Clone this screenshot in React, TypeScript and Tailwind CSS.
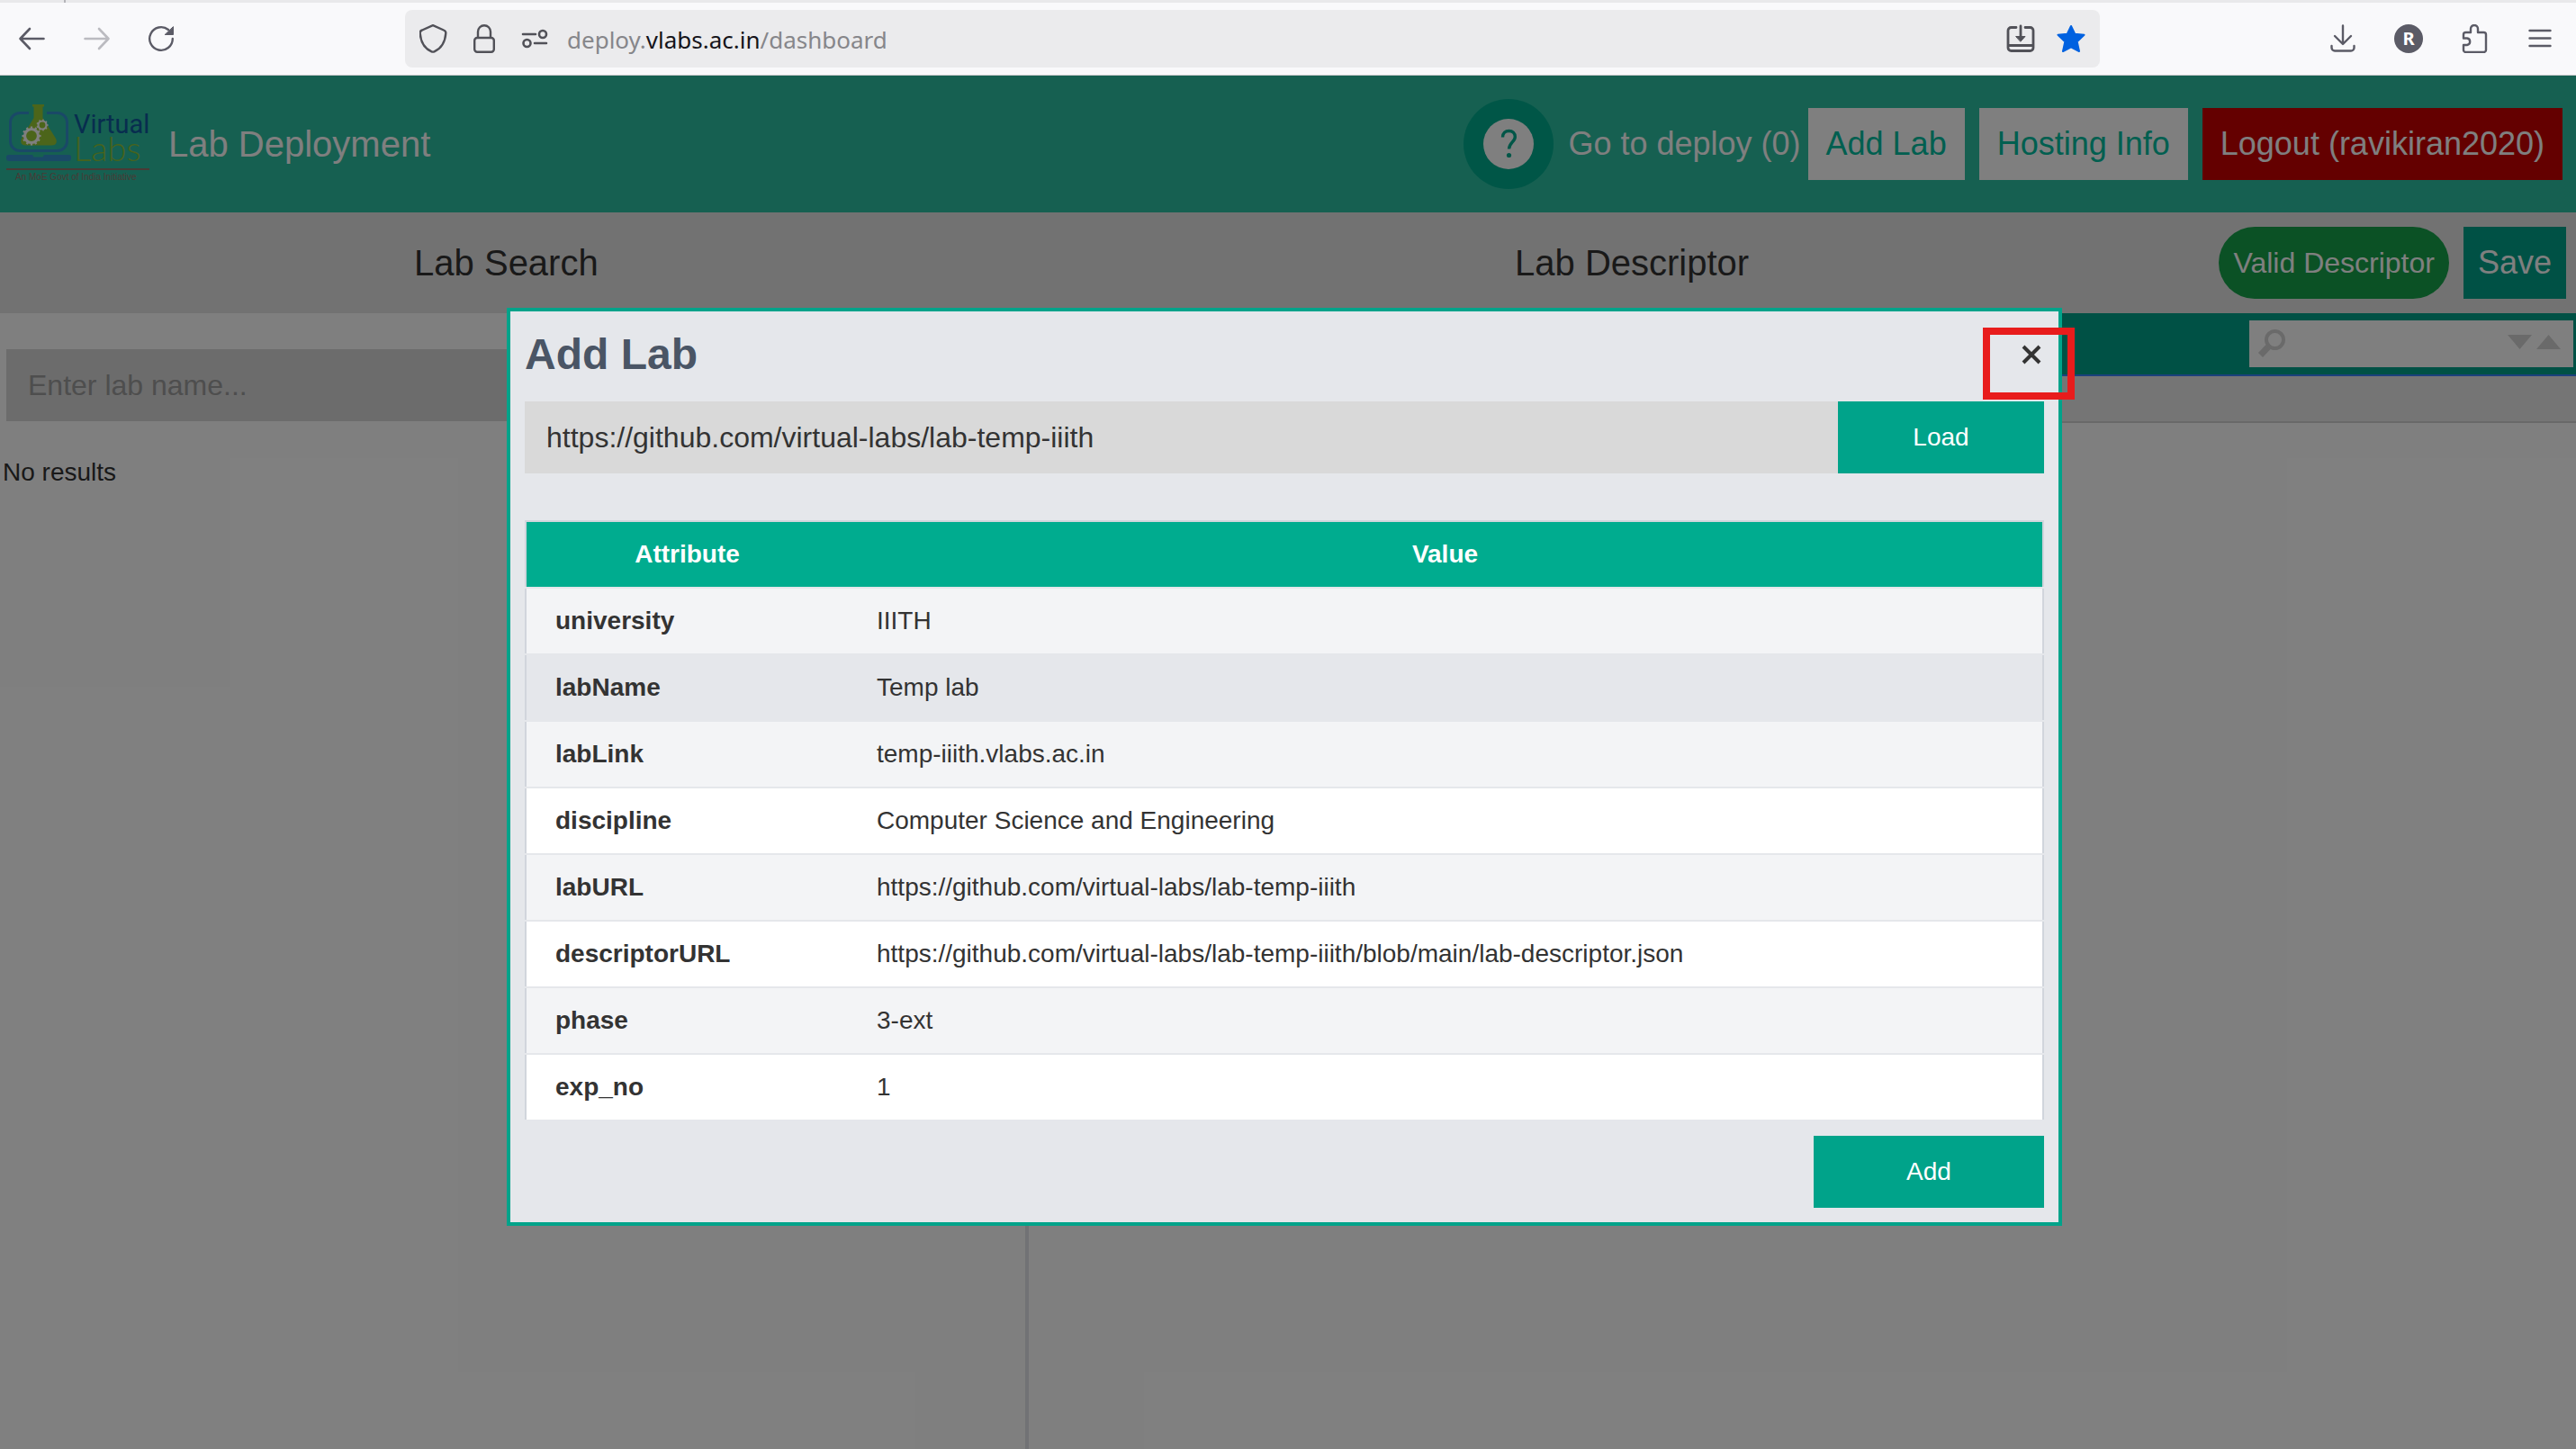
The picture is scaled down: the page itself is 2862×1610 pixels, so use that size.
import React from "react";

const attributes: [string, string][] = [
  ["university", "IIITH"],
  ["labName", "Temp lab"],
  ["labLink", "temp-iiith.vlabs.ac.in"],
  ["discipline", "Computer Science and Engineering"],
  ["labURL", "https://github.com/virtual-labs/lab-temp-iiith"],
  ["descriptorURL", "https://github.com/virtual-labs/lab-temp-iiith/blob/main/lab-descriptor.json"],
  ["phase", "3-ext"],
  ["exp_no", "1"],
];

function Gear({ cx, cy, r, teeth, width }: { cx: number; cy: number; r: number; teeth: number; width: number }) {
  const marks = Array.from({ length: teeth }, (_, i) => (i * 2 * Math.PI) / teeth);
  return (
    <g stroke="#fff" fill="none">
      <circle cx={cx} cy={cy} r={r} strokeWidth={width} />
      {marks.map((a) => (
        <line
          key={a}
          x1={cx + Math.cos(a) * r}
          y1={cy + Math.sin(a) * r}
          x2={cx + Math.cos(a) * (r + width * 0.95)}
          y2={cy + Math.sin(a) * (r + width * 0.95)}
          strokeWidth={width * 0.7}
        />
      ))}
    </g>
  );
}

function Logo() {
  return (
    <svg viewBox="0 0 166 96" width="166" height="96" className="shrink-0 overflow-visible" role="img" aria-label="Virtual Labs">
      <path d="M32 13.500H22a10.500 10.500 0 0 0-10.500 10.500v21a10.500 10.500 0 0 0 10.500 10.500h42a10.500 10.500 0 0 0 10.500-10.500V24A10.500 10.500 0 0 0 64 13.500H52" fill="none" stroke="#3493cf" strokeWidth="3" />
      <path d="M36 4h13v2.500h-1.500V19L61.500 41c3 5 .5 8.500-4 8.500h-29c-4.500 0-7-3.500-4-8.500L37.500 19V6.500H36Z" fill="#98ca35" />
      <Gear cx={35} cy={39} r={7.5} teeth={12} width={3.2} />
      <Gear cx={47} cy={27} r={4.5} teeth={9} width={2.2} />
      <path d="M9.500 60H36l1.500 2.500h10L49 60h27.500a2.500 2.500 0 0 1 2.500 2.500v1a3.500 3.500 0 0 1-3.500 3.500h-65A3.500 3.500 0 0 1 7 63.500v-1A2.500 2.500 0 0 1 9.500 60Z" fill="#3493cf" />
      <text x="82" y="36" fontFamily="Roboto" fontSize="29" fontWeight="400" fill="#105a9e">Virtual</text>
      <text x="82" y="67" fontFamily="Lato, Roboto" fontSize="38" fontWeight="300" fill="#8cc63a">Labs</text>
      <path d="M7 76H166" stroke="#92756c" strokeWidth="2" />
      <text x="17" y="88" fontFamily="Liberation Sans" fontSize="10" fill="#92756c">An MoE Govt of India Initiative</text>
    </svg>
  );
}

const iconButton = "flex h-8 w-8 items-center justify-center";

function BrowserToolbar() {
  return (
    <div className="shrink-0 border-b border-[#cccccf] bg-[#f9f9fb]">
      <div className="flex h-[3px] bg-[#e9e9eb] pl-[71px]">
        <div className="h-full w-0.5 bg-[#b4b4b9]" />
      </div>
      <div className="flex h-20 items-center pr-6 pl-5 text-[#5b5b66]">
        <div className="flex w-[430px] items-center gap-10">
          <button aria-label="Back" className={iconButton}>
            <svg width="32" height="32" viewBox="0 0 32 32" fill="none" stroke="currentColor" strokeWidth="2.600" strokeLinecap="round" strokeLinejoin="round"><path d="M28.500 16H2.500M13 5 2.500 16 13 27" /></svg>
          </button>
          <button aria-label="Forward" className={iconButton + " text-[#bbbbc0]"}>
            <svg width="32" height="32" viewBox="0 0 32 32" fill="none" stroke="currentColor" strokeWidth="2.600" strokeLinecap="round" strokeLinejoin="round"><path d="M2.500 16h26M18 5l10.500 11L18 27" /></svg>
          </button>
          <button aria-label="Reload" className={iconButton}>
            <svg width="32" height="32" viewBox="0 0 32 32" fill="none" stroke="currentColor" strokeWidth="2.400" strokeLinecap="round"><path d="M27.800 16A12.800 12.800 0 1 1 23 6" /><path d="M28.500 3v8.500H19.500Z" fill="currentColor" stroke="currentColor" strokeWidth="1" strokeLinejoin="round" /></svg>
          </button>
        </div>
        <div className="flex h-16 flex-1 items-center rounded-lg bg-[#ebebed] px-4 text-[#515158]">
          <button aria-label="Tracking protection" className={iconButton}>
            <svg width="32" height="32" viewBox="0 0 32 32" fill="none" stroke="currentColor" strokeWidth="2.400" strokeLinejoin="round"><path d="M15 1.200 27 6.500Q29.500 7.500 29.300 10C28.500 20 24 27 16.500 30.300Q15 31 13.500 30.300C6 27 1.500 20 .7 10 .5 8 1.500 7 3 6.500Z" /></svg>
          </button>
          <button aria-label="Site security" className={iconButton + " ml-6"}>
            <svg width="32" height="32" viewBox="0 0 32 32" fill="none" stroke="currentColor" strokeWidth="2.400"><rect x="5.200" y="15" width="21.600" height="15.800" rx="3" /><path d="M9 15V8.200a7 7 0 0 1 14 0V15" /></svg>
          </button>
          <button aria-label="Permissions" className={iconButton + " ml-6"}>
            <svg width="32" height="32" viewBox="0 0 32 32" fill="none" stroke="currentColor" strokeWidth="2.600" strokeLinecap="round"><path d="M3 11h14M16 21h13" /><circle cx="25" cy="11" r="4" /><circle cx="7.500" cy="21" r="4" /></svg>
          </button>
          <div className="ml-5 flex-1 pt-0.5 font-['Noto_Sans','Open_Sans',sans-serif] text-[26px] leading-9 text-[#86868a]">
            deploy.<span className="text-[#15141a]">vlabs.ac.in</span>/dashboard
          </div>
          <button aria-label="Install" className={iconButton}>
            <svg width="32" height="32" viewBox="0 0 32 32" fill="none" stroke="currentColor" strokeWidth="2.800" strokeLinecap="round"><path d="M11 3.500H5.500a3.500 3.500 0 0 0-3.500 3.500v19a3.500 3.500 0 0 0 3.500 3.500h21a3.500 3.500 0 0 0 3.500-3.500V7a3.500 3.500 0 0 0-3.500-3.500H21M2 23.500h28M16 2v14" /><path d="M11 13.500h10L16 19Z" fill="currentColor" strokeWidth="1" strokeLinejoin="round" /></svg>
          </button>
          <button aria-label="Bookmark" className={iconButton + " ml-6 text-[#0061e0]"}>
            <svg width="32" height="32" viewBox="0 0 32 32" fill="currentColor" stroke="currentColor" strokeWidth="2" strokeLinejoin="round"><path d="m16 2 4.200 8.800 10.300 1-7.800 7.500L25 30l-9-4.600L7 30l2.300-10.700L1.500 11.800l10.300-1Z" /></svg>
          </button>
        </div>
        <div className="flex w-[505px] items-center justify-end gap-[41px]">
          <button aria-label="Downloads" className={iconButton}>
            <svg width="32" height="32" viewBox="0 0 32 32" fill="none" stroke="currentColor" strokeWidth="2.400" strokeLinecap="round" strokeLinejoin="round"><path d="M16 1.500v20M7 13l9 9 9-9M3.500 24v2a3.500 3.500 0 0 0 3.500 3.500h18a3.500 3.500 0 0 0 3.500-3.500v-2" /></svg>
          </button>
          <button aria-label="Account" className={iconButton + " rounded-full bg-[#5b5b66] font-['Noto_Sans',sans-serif] text-xl font-bold text-white"}>R</button>
          <button aria-label="Extensions" className={iconButton}>
            <svg width="32" height="32" viewBox="0 0 32 32" fill="none" stroke="currentColor" strokeWidth="2.400" strokeLinejoin="round"><path d="M4 15.500V11.500A2.500 2.500 0 0 1 6.500 9H12V5a4 4 0 0 1 8 0v4h6.500A2.500 2.500 0 0 1 29 11.500v17a2.500 2.500 0 0 1-2.500 2.500h-20A2.500 2.500 0 0 1 4 28.500V23h4a3.800 3.800 0 0 0 0-7.500Z" /></svg>
          </button>
          <button aria-label="Menu" className={iconButton}>
            <svg width="32" height="32" viewBox="0 0 32 32" fill="none" stroke="currentColor" strokeWidth="2.400" strokeLinecap="round"><path d="M4.500 7h23M4.500 15.500h23M4.500 24h23" /></svg>
          </button>
        </div>
      </div>
    </div>
  );
}

function Header() {
  return (
    <header className="flex h-[152px] items-center justify-between bg-[#2cc0a2] pr-[15px] text-white">
      <div className="flex items-center gap-[21px]">
        <Logo />
        <h1 className="text-[40px] leading-[48px]">Lab Deployment</h1>
      </div>
      <div className="flex items-center text-4xl">
        <button aria-label="Help" className="flex h-[100px] w-[100px] items-center justify-center rounded-full bg-[#00ac8f]">
          <svg width="56" height="56" viewBox="0 0 56 56">
            <circle cx="28" cy="28" r="28" fill="#fff" />
            <path d="M21.500 20.500c0-4.500 3-7 7-7s6.800 2.600 6.800 6.500c0 5.500-6.500 6.500-6.800 13.500" fill="none" stroke="#00ac8f" strokeWidth="3.400" />
            <circle cx="28.500" cy="40.500" r="2.600" fill="#00ac8f" />
          </svg>
        </button>
        <a href="#deploy" className="ml-4">Go to deploy (0)</a>
        <div className="ml-2 flex gap-4">
          <button className="h-20 bg-white px-5 text-[#00bfa0]">Add Lab</button>
          <button className="h-20 bg-white px-5 text-[#00bfa0]">Hosting Info</button>
          <button className="h-20 bg-[#c80000] px-5">Logout (ravikiran2020)</button>
        </div>
      </div>
    </header>
  );
}

function Workspace() {
  return (
    <>
      <div className="flex h-28 items-center bg-[#e4e4e4]">
        <h2 className="w-2/5 pr-5 text-center text-[40px] leading-[48px]">Lab Search</h2>
        <div className="flex flex-1 items-center pr-[11px] pl-4">
          <h2 className="flex-1 text-center text-[40px] leading-[48px]">Lab Descriptor</h2>
          <span className="flex h-20 items-center rounded-full bg-[#16a34a] px-4 text-[32px] text-white">Valid Descriptor</span>
          <button className="ml-4 h-20 bg-[#00a38a] px-4 text-4xl text-white">Save</button>
        </div>
      </div>
      <div className="flex flex-1 pr-1">
        <section className="w-2/5 border-r-4 border-[#e2e4ea]">
          <div className="px-[7px] pt-10">
            <input aria-label="Lab name" placeholder="Enter lab name..." className="h-20 w-full bg-[#d8d8d8] px-6 text-[32px] placeholder:text-[#9c9c9c]" />
          </div>
          <p className="mt-[37px] pl-[3px] text-[28px] leading-10">No results</p>
        </section>
        <section className="-mr-1 flex-1">
          <div className="flex h-[70px] items-center justify-end border-b-2 border-[#3883fa] bg-[#00a38a] pr-[3px]">
            <div className="flex h-[52px] w-[360px] items-center bg-white pr-3 pl-2 text-[#d4d4d4]">
              <svg width="34" height="34" viewBox="0 0 34 34" fill="none" stroke="currentColor"><circle cx="20.500" cy="12.500" r="9.500" strokeWidth="4" /><path d="m13 20.500-8.500 9" strokeWidth="7" /></svg>
              <input aria-label="Search fields" className="min-w-0 flex-1" />
              <button aria-label="Next result"><svg width="32" height="32" viewBox="0 0 32 32" fill="currentColor"><path d="M3 6h27L16.500 22Z" /></svg></button>
              <button aria-label="Previous result"><svg width="32" height="32" viewBox="0 0 32 32" fill="currentColor"><path d="M3 22h27L16.500 6Z" /></svg></button>
            </div>
          </div>
          <div className="h-[52px] border-b-2 border-[#d3d3d3] bg-[#ebebeb]" />
        </section>
      </div>
    </>
  );
}

function AddLabDialog() {
  return (
    <div role="dialog" aria-labelledby="add-lab-title" className="relative w-full max-w-[1728px] border-4 border-[#00a38a] bg-gray-200 p-4">
      <div className="mb-5 flex items-center justify-between">
        <h2 id="add-lab-title" className="text-5xl leading-[64px] font-bold text-gray-600">Add Lab</h2>
        <button aria-label="Close" className="flex h-10 w-7 items-center justify-center">
          <svg width="22" height="22" viewBox="0 0 22 22" fill="none" stroke="#333" strokeWidth="4"><path d="m2 2 18 18M20 2 2 20" /></svg>
        </button>
      </div>
      <div className="flex">
        <input aria-label="Repository URL" defaultValue="https://github.com/virtual-labs/lab-temp-iiith" className="h-20 min-w-0 flex-1 bg-[#d9d9d9] px-6 text-[32px]" />
        <button className="h-20 w-[229px] bg-[#00a38a] text-[28px] text-white">Load</button>
      </div>
      <table className="mt-[52px] w-full table-fixed border-collapse border-2 border-gray-300 text-left text-[28px] leading-10">
        <thead>
          <tr className="border-b-2 border-gray-200 bg-[#00ac8f] text-center text-white">
            <th scope="col" className="w-[358px] px-8 py-4">Attribute</th>
            <th scope="col" className="px-8 py-4">Value</th>
          </tr>
        </thead>
        <tbody>
          {attributes.map(([name, value], i) => (
            <tr key={name} className={"border-b-2 border-gray-200 " + (i === 1 ? "bg-gray-200" : i % 2 === 0 ? "bg-gray-100" : "bg-white")}>
              <th scope="row" className="px-8 py-4">{name}</th>
              <td className="px-8 py-4">{value}</td>
            </tr>
          ))}
        </tbody>
      </table>
      <div className="mt-4 flex justify-end">
        <button className="h-20 w-64 bg-[#00a38a] text-[28px] text-white">Add</button>
      </div>
      <div className="pointer-events-none absolute top-[18px] -right-[18px] h-20 w-[102px] border-8 border-[#e81c1c]" />
    </div>
  );
}

export default function App() {
  return (
    <div className="flex min-h-screen flex-col bg-white font-['Liberation_Sans',Arial,sans-serif] text-[#333]">
      <BrowserToolbar />
      <main className="relative flex flex-1 flex-col">
        <Header />
        <Workspace />
        <div className="absolute inset-0 flex items-center justify-center bg-black/50 pt-2.5 pr-2">
          <AddLabDialog />
        </div>
      </main>
    </div>
  );
}
